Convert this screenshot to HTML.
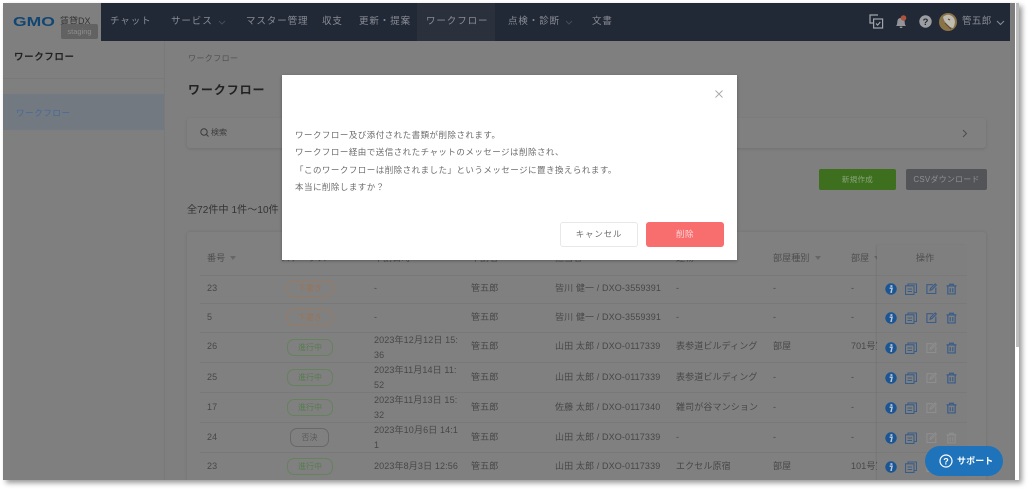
<!DOCTYPE html>
<html lang="ja"><head><meta charset="utf-8"><title>ワークフロー</title>
<style>
html,body{margin:0;padding:0;width:1029px;height:489px;overflow:hidden;background:#fff;font-family:"Liberation Sans","Noto Sans CJK JP",sans-serif}
#f{position:absolute;left:3px;top:3px;width:1016px;height:477px;background:#7f7f7f;box-shadow:3px 3px 5px rgba(0,0,0,.4);overflow:hidden}
#p{position:absolute;left:-3px;top:-3px;width:1029px;height:489px;filter:blur(.35px)}
.a,.c,.m,.b,.n{position:absolute;white-space:nowrap}
.a{font-size:9px;line-height:12px;color:#474747;letter-spacing:.13px}
.n{font-size:9.5px;line-height:14px;color:#8a8d95;letter-spacing:.9px;top:15px}
.c{height:17px;border-radius:7px;font-size:8px;line-height:15px;text-align:center;box-sizing:border-box;border:1px solid}
.o{left:287px;width:46px;border-color:#977a64;color:#9a7355}
.g{left:287px;width:46px;border-color:#65825d;color:#557c4c}
.r{left:290px;width:39px;border-color:#686868;color:#5a5a5a;height:19px;line-height:17px}
.l{position:absolute;left:200px;width:766px;height:1px;background:#797979}
.m{font-size:8.5px;line-height:18px;color:#6c6c6c;letter-spacing:.47px;left:295px}
.h{color:#4e4e4e}
.tri{display:inline-block;border:3px solid transparent;border-top:4px solid #666;margin-left:5px;vertical-align:-2px}
svg{position:absolute;overflow:visible}
</style></head><body>
<svg width="0" height="0" style="position:absolute"><defs>
<symbol id="i" viewBox="0 0 12 12"><circle cx="6" cy="6" r="5.7" fill="#1b5593"/><rect x="5.4" y="2.2" width="2" height="1.7" fill="#bcc8d4"/><path d="M4.6 5.2h2.5l-1 4h1" stroke="#bcc8d4" stroke-width="1.4" fill="none"/></symbol>
<symbol id="d" viewBox="0 0 12 12"><g fill="none" stroke="#3a5c88" stroke-width="1.1"><rect x=".5" y="2.8" width="8.5" height="8.7"/><path d="M3 2.6V1h8.5v8.5H9.2M2.5 6h4.5M2.5 8.5h4.5"/></g></symbol>
<symbol id="e" viewBox="0 0 12 12"><g fill="none" stroke-width="1.2"><path d="M7.5 1.8H1v9.7h9.700V5"/><path d="M4.5 8l.4-2L10 1l1.3 1.3-5 5z"/></g></symbol>
<symbol id="t" viewBox="0 0 12 12"><g fill="none" stroke-width="1.3"><path d="M.6 2.6h10.8M4 2.4V.8h4v1.600M2 2.8v8.600h8V2.800M4.600 5v4.600M7.400 5v4.600"/></g></symbol>
</defs></svg>
<div id="f"><div id="p">
<!-- header -->
<div style="position:absolute;left:0;top:0;width:101px;height:41px;background:#7f7f7f"></div>
<div style="position:absolute;left:101px;top:0;width:909px;height:41px;background:#212836"></div>
<div style="position:absolute;left:417px;top:3px;width:78px;height:38px;background:#2b303d"></div>
<div class="b" style="left:13px;top:14px;font:bold 12.5px/16px 'Liberation Sans',sans-serif;color:#0f4673;transform:scaleX(1.4);transform-origin:left">GMO</div>
<div class="b" style="left:60px;top:15px;font-size:9px;line-height:12px;color:#333">賃貸DX</div>
<div class="b" style="left:61px;top:24px;width:37px;height:15px;background:#626262;border-radius:2px;color:#8d8d8d;font-size:7.5px;line-height:15px;text-align:center">staging</div>
<div class="n" style="left:110px">チャット</div>
<div class="n" style="left:171px">サービス</div>
<div class="n" style="left:246px">マスター管理</div>
<div class="n" style="left:322px">収支</div>
<div class="n" style="left:359px">更新・提案</div>
<div class="n" style="left:426px">ワークフロー</div>
<div class="n" style="left:508px">点検・診断</div>
<div class="n" style="left:592px">文書</div>
<svg style="left:218px;top:20px" width="8" height="5"><path d="M1 1l3 3 3-3" stroke="#464b57" fill="none"/></svg>
<svg style="left:565px;top:20px" width="8" height="5"><path d="M1 1l3 3 3-3" stroke="#464b57" fill="none"/></svg>
<!-- header right -->
<svg style="left:869px;top:14px" width="15" height="15"><g fill="none" stroke="#a3a5aa" stroke-width="1.2"><path d="M9 1H1v8h3"/><rect x="4.6" y="5" width="9" height="9"/><path d="M7 9.5l1.6 1.6L11.3 8"/></g></svg>
<svg style="left:895px;top:15px" width="13" height="14"><path d="M1 11c1.500-1.500 1-3 1.500-5.500C3 3.500 4.500 3 6 3s3 .5 3.500 2.500C10 8 9.500 9.500 11 11z" fill="#92949a"/><rect x="4.800" y="11.600" width="2.500" height="1.400" fill="#92949a"/><circle cx="8.500" cy="3" r="2.800" fill="#b0533e"/></svg>
<svg style="left:919px;top:15px" width="13" height="13"><circle cx="6.500" cy="6.500" r="6.200" fill="#9b9da1"/><text x="6.500" y="10" font-size="9.500" font-weight="bold" text-anchor="middle" fill="#212836" font-family="Liberation Sans">?</text></svg>
<svg style="left:939px;top:13px" width="18" height="18"><circle cx="9" cy="9" r="9" fill="#8b7348"/><path d="M4 4c3-3 7-3 10 0s2 8 0 11C9 14 5 9 4 4z" fill="#bdbbb2"/><path d="M6 10l6 6M9 6l2 1" stroke="#5c4a30" stroke-width="1.200"/></svg>
<div class="n" style="left:962px;letter-spacing:.4px;font-size:9.500px">管五郎</div>
<svg style="left:996px;top:20px" width="9" height="6"><path d="M1 1l3.500 3.500L8 1" stroke="#8a8d94" stroke-width="1" fill="none"/></svg>
<!-- sidebar -->
<div style="position:absolute;left:164px;top:41px;width:1px;height:440px;background:#797979"></div>
<div style="position:absolute;left:0;top:78px;width:164px;height:1px;background:#797979"></div>
<div class="b" style="left:14px;top:51px;font-size:9.5px;font-weight:bold;line-height:14px;color:#222;letter-spacing:.6px">ワークフロー</div>
<div style="position:absolute;left:0;top:94px;width:164px;height:36px;background:#737980"></div>
<div class="b" style="left:16px;top:107px;font-size:8.500px;line-height:13px;color:#44699a;letter-spacing:.6px">ワークフロー</div>
<!-- main -->
<div class="b" style="left:188px;top:53px;font-size:8px;line-height:12px;color:#505050;letter-spacing:.4px">ワークフロー</div>
<div class="b" style="left:188px;top:81px;font-size:12px;font-weight:bold;line-height:18px;color:#222;letter-spacing:.9px">ワークフロー</div>
<div style="position:absolute;left:187px;top:118px;width:799px;height:30px;background:#808080;border-radius:3px;box-shadow:0 1px 3px rgba(0,0,0,.12)"></div>
<svg style="left:200px;top:128px" width="9" height="9"><circle cx="4" cy="4" r="3.200" stroke="#3c3c3c" fill="none"/><path d="M6.500 6.500l2 2" stroke="#3c3c3c"/></svg>
<div class="b" style="left:211px;top:126px;font-size:8px;line-height:13px;color:#3c3c3c">検索</div>
<svg style="left:962px;top:129px" width="6" height="9"><path d="M1 1l3.500 3.500L1 8" stroke="#4c4c4c" fill="none"/></svg>
<div class="b" style="left:819px;top:169px;width:77px;height:21px;background:#3d6f1f;border-radius:2px;text-align:center;font-size:7.500px;line-height:21px;color:#8aa67b;letter-spacing:.3px">新規作成</div>
<div class="b" style="left:906px;top:169px;width:81px;height:21px;background:#535457;border-radius:2px;text-align:center;font-size:8px;line-height:21px;color:#8e8f91;letter-spacing:.2px">CSVダウンロード</div>
<div class="b" style="left:187px;top:204px;font-size:10px;line-height:14px;color:#333;letter-spacing:.1px">全72件中 1件～10件</div>
<!-- table -->
<div style="position:absolute;left:187px;top:232px;width:799px;height:250px;background:#808080;border-radius:3px;box-shadow:0 0 3px rgba(0,0,0,.12)"></div>
<div class="a h" style="left:207px;top:252px">番号<i class="tri"></i></div>
<div class="a h" style="left:281px;top:252px">ステータス</div>
<div class="a h" style="left:374px;top:252px">申請日時</div>
<div class="a h" style="left:471px;top:252px">申請者</div>
<div class="a h" style="left:555px;top:252px">担当者</div>
<div class="a h" style="left:676px;top:252px">建物</div>
<div class="a h" style="left:773px;top:252px">部屋種別<i class="tri"></i></div>
<div class="a h" style="left:851px;top:252px">部屋<i class="tri"></i></div>
<div class="l" style="top:275px"></div><div class="l" style="top:303px"></div><div class="l" style="top:332px"></div><div class="l" style="top:362px"></div><div class="l" style="top:392px"></div><div class="l" style="top:422px"></div><div class="l" style="top:452px"></div>

<div class="a" style="left:207px;top:282px">23</div><div class="c o" style="top:280px">下書き</div><div class="a" style="left:374px;top:282px">-</div><div class="a" style="left:471px;top:282px">管五郎</div><div class="a" style="left:555px;top:282px">皆川 健一 / DXO-3559391</div><div class="a" style="left:676px;top:282px">-</div><div class="a" style="left:773px;top:282px">-</div><div class="a" style="left:851px;top:282px">-</div>
<div class="a" style="left:207px;top:311px">5</div><div class="c o" style="top:309px">下書き</div><div class="a" style="left:374px;top:311px">-</div><div class="a" style="left:471px;top:311px">管五郎</div><div class="a" style="left:555px;top:311px">皆川 健一 / DXO-3559391</div><div class="a" style="left:676px;top:311px">-</div><div class="a" style="left:773px;top:311px">-</div><div class="a" style="left:851px;top:311px">-</div>
<div class="a" style="left:207px;top:340px">26</div><div class="c g" style="top:339px">進行中</div><div class="a" style="left:374px;top:333px;line-height:15px">2023年12月12日 15:<br>36</div><div class="a" style="left:471px;top:340px">管五郎</div><div class="a" style="left:555px;top:340px">山田 太郎 / DXO-0117339</div><div class="a" style="left:676px;top:340px">表参道ビルディング</div><div class="a" style="left:773px;top:340px">部屋</div><div class="a" style="left:851px;top:340px">701号室</div>
<div class="a" style="left:207px;top:371px">25</div><div class="c g" style="top:369px">進行中</div><div class="a" style="left:374px;top:363px;line-height:15px">2023年11月14日 11:<br>52</div><div class="a" style="left:471px;top:371px">管五郎</div><div class="a" style="left:555px;top:371px">山田 太郎 / DXO-0117339</div><div class="a" style="left:676px;top:371px">表参道ビルディング</div><div class="a" style="left:773px;top:371px">-</div><div class="a" style="left:851px;top:371px">-</div>
<div class="a" style="left:207px;top:401px">17</div><div class="c g" style="top:399px">進行中</div><div class="a" style="left:374px;top:393px;line-height:15px">2023年11月13日 15:<br>32</div><div class="a" style="left:471px;top:401px">管五郎</div><div class="a" style="left:555px;top:401px">佐藤 太郎 / DXO-0117340</div><div class="a" style="left:676px;top:401px">雑司が谷マンション</div><div class="a" style="left:773px;top:401px">-</div><div class="a" style="left:851px;top:401px">-</div>
<div class="a" style="left:207px;top:431px">24</div><div class="c r" style="top:428px">否決</div><div class="a" style="left:374px;top:423px;line-height:15px">2023年10月6日 14:1<br>1</div><div class="a" style="left:471px;top:431px">管五郎</div><div class="a" style="left:555px;top:431px">山田 太郎 / DXO-0117339</div><div class="a" style="left:676px;top:431px">-</div><div class="a" style="left:773px;top:431px">-</div><div class="a" style="left:851px;top:431px">-</div>
<div class="a" style="left:207px;top:460px">23</div><div class="c g" style="top:458px">進行中</div><div class="a" style="left:374px;top:460px">2023年8月3日 12:56</div><div class="a" style="left:471px;top:460px">管五郎</div><div class="a" style="left:555px;top:460px">山田 太郎 / DXO-0117339</div><div class="a" style="left:676px;top:460px">エクセル原宿</div><div class="a" style="left:773px;top:460px">部屋</div><div class="a" style="left:851px;top:460px">101号室</div>
<!-- sticky action column -->
<div style="position:absolute;left:877px;top:245px;width:90px;height:236px;background:#7f7f7f;box-shadow:-1px 0 2px rgba(0,0,0,.08)"></div>
<div class="l" style="left:877px;width:90px;top:275px"></div><div class="l" style="left:877px;width:90px;top:303px"></div><div class="l" style="left:877px;width:90px;top:332px"></div><div class="l" style="left:877px;width:90px;top:362px"></div><div class="l" style="left:877px;width:90px;top:392px"></div><div class="l" style="left:877px;width:90px;top:422px"></div><div class="l" style="left:877px;width:90px;top:452px"></div>
<div class="a h" style="left:916px;top:252px">操作</div>
<svg style="left:885px;top:283px" width="12" height="12"><use href="#i"/></svg><svg style="left:905px;top:283px" width="12" height="12"><use href="#d"/></svg><svg style="left:926px;top:283px;stroke:#3a5c88" width="11" height="11"><use href="#e"/></svg><svg style="left:946px;top:283px;stroke:#3a5c88" width="11" height="12"><use href="#t"/></svg>
<svg style="left:885px;top:312px" width="12" height="12"><use href="#i"/></svg><svg style="left:905px;top:312px" width="12" height="12"><use href="#d"/></svg><svg style="left:926px;top:312px;stroke:#3a5c88" width="11" height="11"><use href="#e"/></svg><svg style="left:946px;top:312px;stroke:#3a5c88" width="11" height="12"><use href="#t"/></svg>
<svg style="left:885px;top:342px" width="12" height="12"><use href="#i"/></svg><svg style="left:905px;top:342px" width="12" height="12"><use href="#d"/></svg><svg style="left:926px;top:342px;stroke:#8e8e8e" width="11" height="11"><use href="#e"/></svg><svg style="left:946px;top:342px;stroke:#3a5c88" width="11" height="12"><use href="#t"/></svg>
<svg style="left:885px;top:372px" width="12" height="12"><use href="#i"/></svg><svg style="left:905px;top:372px" width="12" height="12"><use href="#d"/></svg><svg style="left:926px;top:372px;stroke:#8e8e8e" width="11" height="11"><use href="#e"/></svg><svg style="left:946px;top:372px;stroke:#3a5c88" width="11" height="12"><use href="#t"/></svg>
<svg style="left:885px;top:402px" width="12" height="12"><use href="#i"/></svg><svg style="left:905px;top:402px" width="12" height="12"><use href="#d"/></svg><svg style="left:926px;top:402px;stroke:#8e8e8e" width="11" height="11"><use href="#e"/></svg><svg style="left:946px;top:402px;stroke:#3a5c88" width="11" height="12"><use href="#t"/></svg>
<svg style="left:885px;top:432px" width="12" height="12"><use href="#i"/></svg><svg style="left:905px;top:432px" width="12" height="12"><use href="#d"/></svg><svg style="left:926px;top:432px;stroke:#8e8e8e" width="11" height="11"><use href="#e"/></svg><svg style="left:946px;top:432px;stroke:#8e8e8e" width="11" height="12"><use href="#t"/></svg>
<svg style="left:885px;top:461px" width="12" height="12"><use href="#i"/></svg><svg style="left:905px;top:461px" width="12" height="12"><use href="#d"/></svg><svg style="left:926px;top:461px;stroke:#8e8e8e" width="11" height="11"><use href="#e"/></svg><svg style="left:946px;top:461px;stroke:#3a5c88" width="11" height="12"><use href="#t"/></svg>
<!-- right gutter / scrollbar -->
<div style="position:absolute;left:1010px;top:0;width:5px;height:481px;background:#7d7d7d"></div>
<div style="position:absolute;left:1015px;top:0;width:5px;height:481px;background:#fff"></div>
<div style="position:absolute;left:1016px;top:3px;width:3px;height:344px;background:#bdbdbd"></div>
<!-- modal -->
<div style="position:absolute;left:282px;top:75px;width:455px;height:185px;background:#fff;box-shadow:0 1px 3px rgba(0,0,0,.3)"></div>
<svg style="left:715px;top:90px" width="8" height="8"><path d="M.5.500l7 7M7.500.500l-7 7" stroke="#a8a8a8" stroke-width=".9"/></svg>
<div class="m" style="top:126px">ワークフロー及び添付された書類が削除されます。</div>
<div class="m" style="top:143px">ワークフロー経由で送信されたチャットのメッセージは削除され、</div>
<div class="m" style="top:161px">「このワークフローは削除されました」というメッセージに置き換えられます。</div>
<div class="m" style="top:178px">本当に削除しますか？</div>
<div class="b" style="left:560px;top:222px;width:78px;height:25px;box-sizing:border-box;border:1px solid #e8e8ea;border-radius:3px;background:#fff;text-align:center;font-size:8.500px;line-height:23px;color:#6c6c6c;letter-spacing:.8px">キャンセル</div>
<div class="b" style="left:646px;top:222px;width:78px;height:25px;background:#f86e6f;border-radius:3px;text-align:center;font-size:8.500px;line-height:25px;color:#fdd5d5;letter-spacing:.5px">削除</div>
<!-- support -->
<div style="position:absolute;left:925px;top:446px;width:78px;height:30px;background:#1f73bb;border-radius:15px"></div>
<svg style="left:939px;top:454px" width="14" height="14"><circle cx="7" cy="7" r="6" fill="none" stroke="#fff" stroke-width="1.200"/><text x="7" y="10.300" font-size="9" font-weight="bold" text-anchor="middle" fill="#fff" font-family="Liberation Sans">?</text></svg>
<div class="b" style="left:957px;top:454px;font-size:9px;font-weight:bold;line-height:14px;color:#fff;letter-spacing:.1px">サポート</div>
</div></div>
</body></html>
